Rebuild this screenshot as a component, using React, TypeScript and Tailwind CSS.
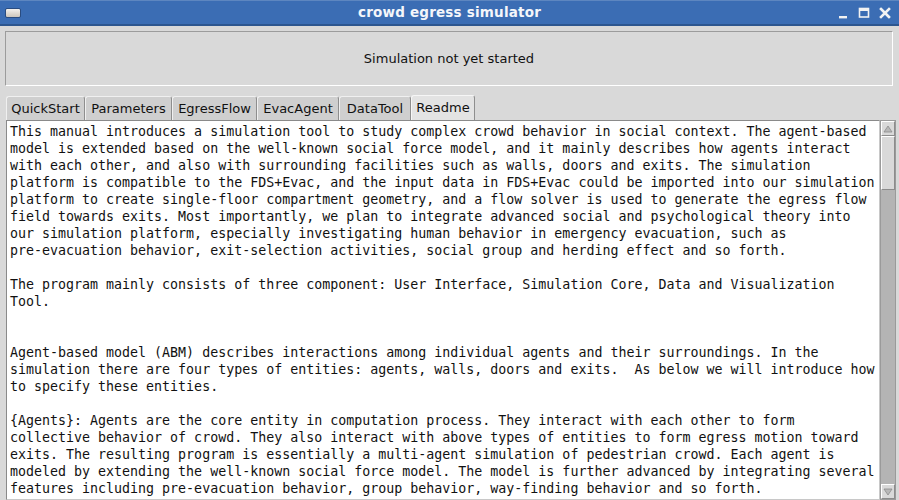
import React from 'react'

const TABS = [
  { name: 'QuickStart', w: 'w-[79px]' },
  { name: 'Parameters', w: 'w-[87px]' },
  { name: 'EgressFlow', w: 'w-[85px]' },
  { name: 'EvacAgent', w: 'w-[82px]' },
  { name: 'DataTool', w: 'w-[72px]' },
  { name: 'Readme', w: 'w-[64px]' },
]

const LINES = [
  'This manual introduces a simulation tool to study complex crowd behavior in social context. The agent-based',
  'model is extended based on the well-known social force model, and it mainly describes how agents interact',
  'with each other, and also with surrounding facilities such as walls, doors and exits. The simulation',
  'platform is compatible to the FDS+Evac, and the input data in FDS+Evac could be imported into our simulation',
  'platform to create single-floor compartment geometry, and a flow solver is used to generate the egress flow',
  'field towards exits. Most importantly, we plan to integrate advanced social and psychological theory into',
  'our simulation platform, especially investigating human behavior in emergency evacuation, such as',
  'pre-evacuation behavior, exit-selection activities, social group and herding effect and so forth.',
  '',
  'The program mainly consists of three component: User Interface, Simulation Core, Data and Visualization',
  'Tool.',
  '',
  '',
  'Agent-based model (ABM) describes interactions among individual agents and their surroundings. In the',
  'simulation there are four types of entities: agents, walls, doors and exits.  As below we will introduce how',
  'to specify these entities.',
  '',
  '{Agents}: Agents are the core entity in computation process. They interact with each other to form',
  'collective behavior of crowd. They also interact with above types of entities to form egress motion toward',
  'exits. The resulting program is essentially a multi-agent simulation of pedestrian crowd. Each agent is',
  'modeled by extending the well-known social force model. The model is further advanced by integrating several',
  'features including pre-evacuation behavior, group behavior, way-finding behavior and so forth.',
]

function TitleBar() {
  return (
    <div className="h-[26px] bg-[#3b6db4] border-t border-[#5d86c0] border-b-2 border-b-[#2d568f] flex items-center justify-between px-[5px] relative">
      <div className="w-[16px] h-[10px] rounded-[2px] bg-gradient-to-b from-[#f4f2ee] to-[#cdc6bb] border border-[#2a4c80]" />
      <div
        className="absolute inset-x-0 top-0 bottom-0 flex items-center justify-center text-[#f4f6fa] font-bold text-[13.5px] tracking-[0.2px] pointer-events-none"
        style={{ fontFamily: '"DejaVu Sans", sans-serif' }}
      >
        crowd egress simulator
      </div>
      <div className="flex items-center gap-[9px] pr-[3px]">
        <svg width="12" height="12" viewBox="0 0 12 12">
          <rect x="2" y="9" width="8" height="2.4" fill="#f2f2f2" />
        </svg>
        <svg width="12" height="12" viewBox="0 0 12 12">
          <rect x="1.5" y="1.5" width="9" height="8.5" fill="none" stroke="#f2f2f2" strokeWidth="1.6" />
          <rect x="1.5" y="1.5" width="9" height="2.5" fill="#f2f2f2" />
        </svg>
        <svg width="12" height="12" viewBox="0 0 12 12">
          <path d="M2 2 L10 10 M10 2 L2 10" stroke="#f2f2f2" strokeWidth="2.6" strokeLinecap="square" />
        </svg>
      </div>
    </div>
  )
}

function Scrollbar() {
  return (
    <div className="w-[16px] flex flex-col bg-[#b4b4b4] border border-[#9a9a9a]">
      <div className="h-[15px] bg-[#d9d9d9] border border-t-white border-l-white border-r-[#8c8c8c] border-b-[#8c8c8c] flex items-center justify-center">
        <svg width="10" height="8" viewBox="0 0 10 8">
          <path d="M5 1 L9 7 L1 7 Z" fill="#b8b8b8" stroke="#8c8c8c" strokeWidth="0.8" />
        </svg>
      </div>
      <div className="h-[54px] bg-[#d9d9d9] border border-t-white border-l-white border-r-[#8c8c8c] border-b-[#8c8c8c]" />
      <div className="flex-1" />
      <div className="h-[15px] bg-[#d9d9d9] border border-t-white border-l-white border-r-[#8c8c8c] border-b-[#8c8c8c] flex items-center justify-center">
        <svg width="10" height="8" viewBox="0 0 10 8">
          <path d="M5 7 L9 1 L1 1 Z" fill="#b8b8b8" stroke="#8c8c8c" strokeWidth="0.8" />
        </svg>
      </div>
    </div>
  )
}

export default function App() {
  const sans = { fontFamily: '"DejaVu Sans", sans-serif' }
  return (
    <div className="w-[899px] h-[500px] bg-[#d9d9d9] flex flex-col overflow-hidden">
      <TitleBar />
      <div className="pl-[5px] pr-[3px] pt-[5px] flex flex-col flex-1 min-h-0">
        <div className="h-[55px] mr-[3px] border border-t-[#9c9c9c] border-l-[#9c9c9c] border-r-white border-b-white flex items-center justify-center text-[13px] text-[#111]" style={sans}>
          Simulation not yet started
        </div>
        <div className="flex items-end mt-[9px] pl-[1px]">
          {TABS.map((t) => (
            <div
              key={t.name}
              className={
                t.name === 'Readme'
                  ? `${t.w} h-[25px] flex items-center justify-center text-[13px] text-[#111] bg-[#e3e3e3] border border-t-[#f6f6f6] border-l-[#f6f6f6] border-r-[#8e8e8e] border-b-0 rounded-t-[3px]`
                  : `${t.w} h-[24px] flex items-center justify-center text-[13px] text-[#111] bg-[#cfcfcf] border border-t-[#f0f0f0] border-l-[#f0f0f0] border-r-[#8e8e8e] border-b-0 rounded-t-[3px]`
              }
              style={sans}
            >
              {t.name}
            </div>
          ))}
        </div>
        <div className="flex flex-1 min-h-0 pl-[1px]">
          <div className="flex-1 bg-white border border-t-[#8a8a8a] border-l-[#8a8a8a] border-r-[#c8c8c8] border-b-[#c8c8c8] overflow-hidden pl-[3px] pt-[2px]">
            {LINES.map((l, i) => (
              <div
                key={i}
                className="whitespace-pre h-[17px] leading-[17px] text-[13.3px] text-[#111]"
                style={{ fontFamily: '"DejaVu Sans Mono", monospace' }}
              >
                {l}
              </div>
            ))}
          </div>
          <Scrollbar />
        </div>
      </div>
    </div>
  )
}
